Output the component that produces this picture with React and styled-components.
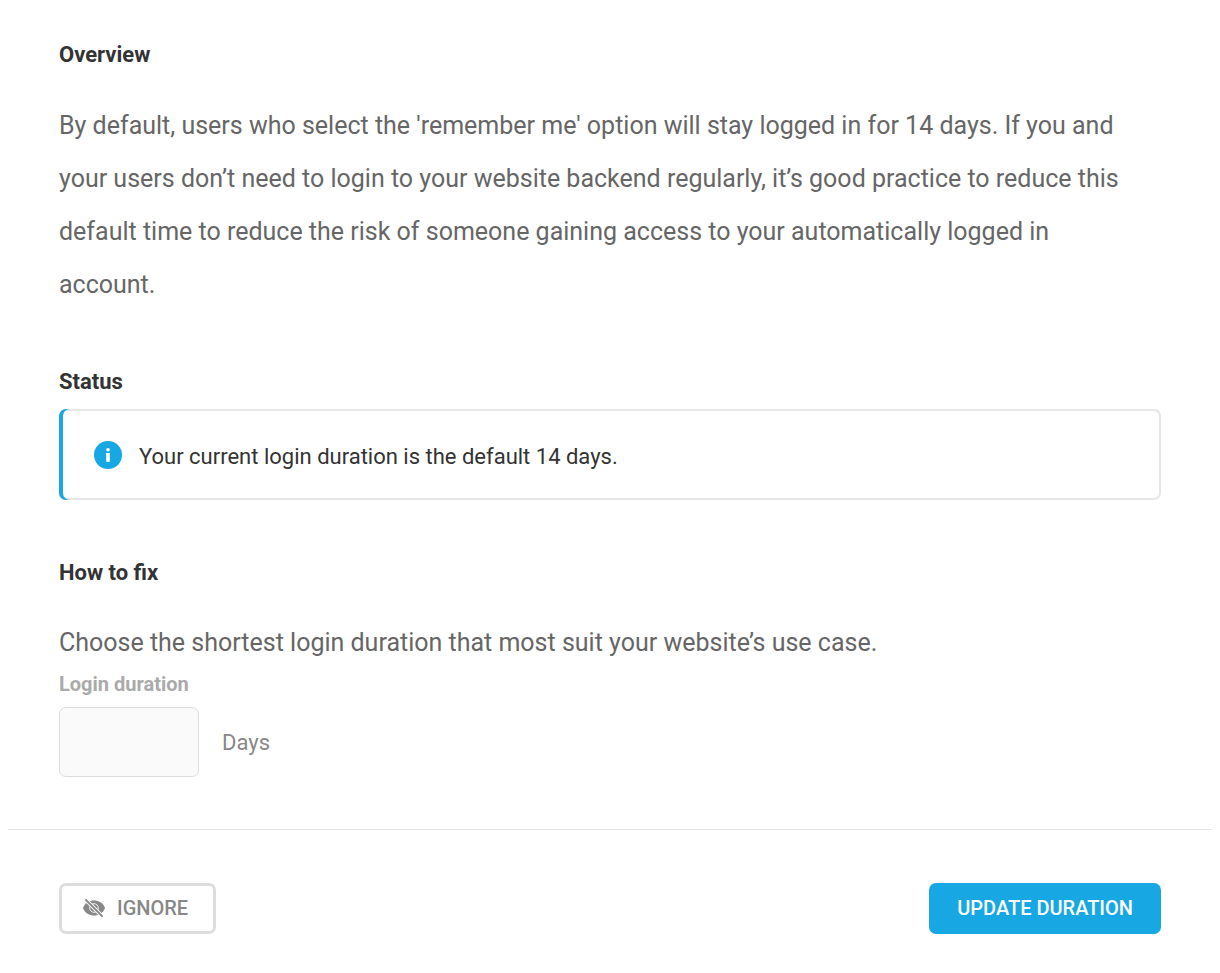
import React from 'react';
import styled, { createGlobalStyle } from 'styled-components';

const GlobalStyle = createGlobalStyle`
  * {
    box-sizing: border-box;
  }

  body {
    margin: 0;
    background-color: #fff;
    font-family: Roboto, sans-serif;
  }
`;

const Panel = styled.main`
  padding: 0 8px;
`;

const Content = styled.div`
  padding: 40px 51px 52px;
`;

const Section = styled.section`
  margin-bottom: ${({ $gap }) => $gap || 0}px;
`;

const Title = styled.h2`
  margin: 0;
  color: #333;
  font-size: 22px;
  font-weight: 700;
  line-height: 30px;
`;

const Text = styled.p`
  margin: 29px 0 0;
  padding-right: 20px;
  color: #666;
  font-size: 25px;
  line-height: ${({ $single }) => ($single ? 52 : 53)}px;
`;

/* inset shadows so the blue edge follows the rounded corners */
const Notice = styled.div`
  display: flex;
  align-items: center;
  gap: 17px;
  height: 91px;
  margin-top: 12px;
  padding: 0 35px;
  border-radius: 7px;
  box-shadow: inset 4px 0 0 0 #17a8e3, inset 0 0 0 2px #e6e6e6;
  color: #333;
  font-size: 22px;
`;

const NoticeText = styled.span`
  padding-top: 3px;
`;

const Label = styled.label`
  display: block;
  color: #aaa;
  font-size: 20px;
  font-weight: 700;
  line-height: 30px;
`;

const Field = styled.div`
  display: flex;
  align-items: center;
  gap: 23px;
  margin-top: 8px;
  color: #888;
  font-size: 22px;
`;

const DaysInput = styled.input`
  width: 140px;
  height: 70px;
  padding: 0 20px;
  border: 1px solid #ddd;
  border-radius: 7px;
  background-color: #fafafa;
  color: #333;
  font: inherit;
`;

const Footer = styled.footer`
  display: flex;
  justify-content: space-between;
  padding: 53px 51px 39px;
  border-top: 1px solid #e6e6e6;
`;

const Button = styled.button`
  display: flex;
  align-items: center;
  gap: 12px;
  height: 51px;
  padding: 0 28px 2px;
  border: none;
  border-radius: 7px;
  background-color: #17a8e3;
  color: #fff;
  font-family: inherit;
  font-size: 20px;
  font-weight: 500;
  text-transform: uppercase;
  cursor: pointer;
`;

const GhostButton = styled(Button)`
  padding: 0 25px 2px 21px;
  border: 3px solid #ddd;
  background-color: transparent;
  color: #888;
`;

function InfoIcon() {
  return (
    <svg width="28" height="28" viewBox="0 0 28 28" aria-hidden="true">
      <circle cx="14" cy="14" r="14" fill="#17a8e3" />
      <circle cx="14" cy="8.7" r="1.8" fill="#fff" />
      <path d="M12.8 12H15.8V20A1 1 0 0 1 14.8 21H13.2A1 1 0 0 1 12.2 20V13.8L11.8 13A1 1 0 0 1 12.8 12Z" fill="#fff" />
    </svg>
  );
}

function HideIcon() {
  return (
    <svg width="22" height="18" viewBox="0 0 22 18" aria-hidden="true">
      <path d="M0 9C2 3.5 6.5 1.5 11 1.5S20 3.5 22 9C20 14.5 15.5 16.5 11 16.5S2 14.5 0 9Z" fill="#888" />
      <circle cx="11" cy="9" r="4.3" fill="none" stroke="#fff" strokeWidth="0.9" />
      <path d="M2 0L20 18" stroke="#fff" strokeWidth="3.8" />
      <path d="M3 1L19 17" stroke="#888" strokeWidth="1.8" strokeLinecap="round" />
    </svg>
  );
}

function App() {
  return (
    <>
      <GlobalStyle />
      <Panel>
        <Content>
          <Section $gap={56}>
            <Title>Overview</Title>
            <Text>
              By default, users who select the 'remember me' option will stay logged in for 14 days. If you and your
              users don’t need to login to your website backend regularly, it’s good practice to reduce this default
              time to reduce the risk of someone gaining access to your automatically logged in account.
            </Text>
          </Section>
          <Section $gap={58}>
            <Title>Status</Title>
            <Notice>
              <InfoIcon />
              <NoticeText>Your current login duration is the default 14 days.</NoticeText>
            </Notice>
          </Section>
          <Section>
            <Title>How to fix</Title>
            <Text $single>Choose the shortest login duration that most suit your website’s use case.</Text>
            <Label htmlFor="duration">Login duration</Label>
            <Field>
              <DaysInput id="duration" type="text" />
              Days
            </Field>
          </Section>
        </Content>
        <Footer>
          <GhostButton type="button">
            <HideIcon />
            Ignore
          </GhostButton>
          <Button type="submit">Update duration</Button>
        </Footer>
      </Panel>
    </>
  );
}

export default App;
